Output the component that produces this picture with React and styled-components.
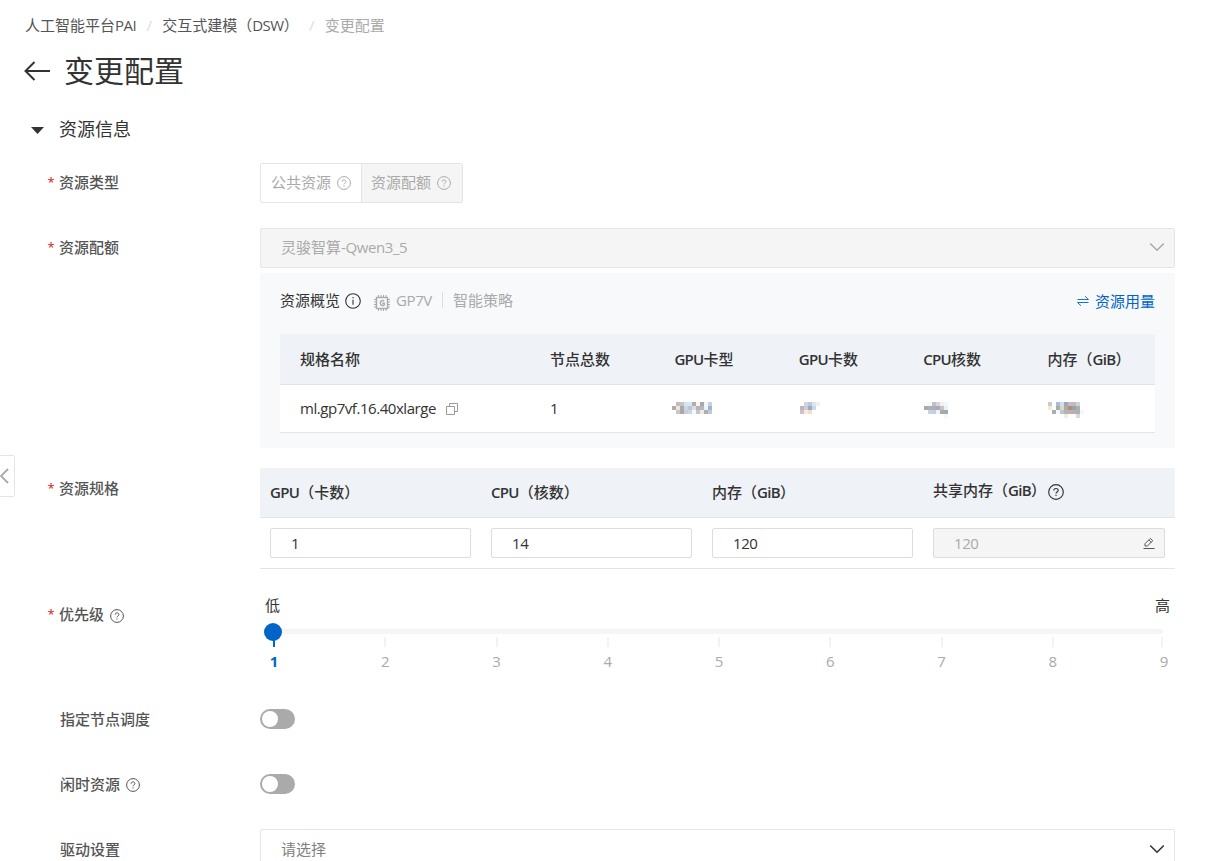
import React from 'react'
import styled, { createGlobalStyle, css } from 'styled-components'

const GlobalStyle = createGlobalStyle`
  * {
    box-sizing: border-box;
  }
  body {
    margin: 0;
    overflow: hidden;
    background: #fff;
    color: #333;
    font-family: 'Open Sans', 'Noto Sans CJK SC', sans-serif;
    font-size: 15px;
    line-height: 22px;
  }
`

const Page = styled.main`
  height: 861px;
  padding: 14px 34px 0 25px;
  overflow: hidden;
`

const Latin = styled.span`
  letter-spacing: ${props => props.$track || -0.5}px;
`

const Breadcrumb = styled.nav`
  display: flex;
  height: 22px;
  color: #555;
  white-space: nowrap;
`

const Crumb = styled.span`
  color: ${props => (props.$current ? '#aaa' : '#555')};
`

const Slash = styled.span`
  width: 26px;
  text-align: center;
  color: #ddd;
`

const TitleBar = styled.header`
  display: flex;
  align-items: center;
  height: 40px;
  margin-top: 15px;

  svg {
    margin: 0 14px 0 -1px;
  }
  h1 {
    margin: 0;
    font-size: 30px;
    font-weight: 400;
    line-height: 40px;
  }
`

const SectionHead = styled.div`
  display: flex;
  align-items: center;
  height: 26px;
  margin-top: 25px;
  padding-left: 6px;

  svg {
    margin: 2px 15px 0 0;
  }
  h2 {
    margin: 0;
    font-size: 18px;
    font-weight: 400;
    line-height: 26px;
  }
`

const Form = styled.div`
  padding-top: 21px;
`

const Field = styled.div`
  display: flex;
  height: ${props => props.$height}px;
  margin-bottom: ${props => props.$gap || 0}px;
`

const Label = styled.div`
  display: flex;
  align-items: center;
  flex: 0 0 235px;
  height: ${props => (props.$raised ? 38 : 40)}px;
  padding-left: ${props => (props.$required ? 23 : 35)}px;
  color: #555;
  font-weight: 500;

  svg {
    margin: ${props => (props.$raised ? 3 : 2)}px 0 0 5.5px;
  }
`

const Star = styled.span`
  width: 11px;
  margin-left: -0.5px;
  margin-right: 0.5px;
  color: #d22020;
  font-size: 13px;
`

const Control = styled.div`
  flex: 1;
  min-width: 0;
`

const RadioGroup = styled.div`
  display: inline-flex;
  height: 40px;
  border: 1px solid #e5e5e5;
  border-radius: 2px;
`

const Radio = styled.div`
  display: flex;
  align-items: center;
  gap: 6px;
  width: ${props => (props.$active ? 101 : 100)}px;
  padding: 0 0 2px ${props => (props.$active ? 9 : 10)}px;
  color: #aaa;
  background: ${props => (props.$active ? '#f5f5f5' : '#fff')};
  border-left: ${props => (props.$active ? '1px solid #e5e5e5' : 'none')};

  svg {
    margin-top: 1px;
  }
`

const Select = styled.div`
  display: flex;
  align-items: center;
  justify-content: space-between;
  height: 40px;
  padding: 0 9px ${props => (props.$disabled ? 2 : 0)}px 20px;
  border: 1px solid #e5e5e5;
  border-radius: 2px;
  color: ${props => (props.$disabled ? '#aaa' : '#808080')};
  background: ${props => (props.$disabled ? '#f5f5f5' : '#fff')};
`

const Overview = styled.section`
  height: 175px;
  margin-top: 5px;
  padding: 16px 20px 0;
  background: #f7f9fb;
`

const OverviewHead = styled.div`
  display: flex;
  align-items: center;
  height: 22px;
  margin-bottom: 23px;
  color: #aaa;

  strong {
    margin-right: 5px;
    color: #333;
    font-weight: 400;
  }
  > svg {
    margin-top: 2px;
  }
`

const ChipName = styled.span`
  display: flex;
  align-items: center;
  margin-left: 13px;

  svg {
    margin: 5px 6px 0 0;
  }
`

const Divider = styled.i`
  width: 1px;
  height: 16px;
  margin: 0 10px;
  background: #ddd;
`

const UsageLink = styled.a`
  display: flex;
  align-items: center;
  gap: 6px;
  margin: 1px 0 0 auto;
  color: #0064c8;
`

const row = css`
  display: grid;
  align-items: center;
  border-bottom: 1px solid #e3e4e6;

  ${Latin} {
    font-weight: ${props => (props.$head ? 600 : 400)};
    letter-spacing: ${props => (props.$head ? -0.7 : -0.45)}px;
  }
`

const SpecRow = styled.div`
  ${row}
  grid-template-columns: 250px repeat(4, 124.4px) 1fr;
  height: ${props => (props.$head ? 51 : 48)}px;
  padding-bottom: ${props => (props.$head ? 0 : 2)}px;
  background: ${props => (props.$head ? '#eff2f7' : '#fff')};
  border-radius: ${props => (props.$head ? '2px 2px 0 0' : 0)};
  font-weight: ${props => (props.$head ? 500 : 400)};
  white-space: nowrap;

  > * {
    display: flex;
    align-items: center;
    padding-left: 20px;
  }
`

const CopyButton = styled.span`
  display: flex;
  margin: 3px 0 0 10px;
`

const Mosaic = styled.span`
  align-self: start;
  padding-top: 17px;

  svg {
    margin-left: ${props => props.$shift || 0}px;
  }
`

const SizeRow = styled.div`
  ${row}
  grid-template-columns: 221px 221px 221px 252px;
  height: ${props => (props.$head ? 50 : 51)}px;
  padding-bottom: ${props => (props.$head ? 2 : 0)}px;
  background: ${props => (props.$head ? '#eff2f7' : '#fff')};
  border-radius: ${props => (props.$head ? '2px 2px 0 0' : 0)};
  font-weight: 500;

  > * {
    margin: 0 10px;
  }
`

const HelpHead = styled.span`
  display: flex;
  align-items: center;
  padding-bottom: 3px;

  svg {
    margin: 3px 0 0 2px;
  }
`

const NumberBox = styled.div`
  display: flex;
  align-items: center;
  justify-content: space-between;
  height: 30px;
  padding: 0 9px 0 20px;
  border: 1px solid #ddd;
  border-radius: 2px;
  font-weight: 400;
  color: ${props => (props.$disabled ? '#aaa' : '#333')};
  background: ${props => (props.$disabled ? '#f5f5f5' : '#fff')};
`

const Ends = styled.div`
  display: flex;
  justify-content: space-between;
  margin-top: -1px;
  padding: 0 5px;
`

const Track = styled.div`
  display: flex;
  align-items: center;
  height: 5px;
  margin: 13px 12px 0 13px;
  border-radius: 3px;
  background: #f5f5f5;
`

const Handle = styled.span`
  flex: none;
  width: 18px;
  height: 18px;
  margin-left: -9px;
  border-radius: 50%;
  background: #0064c8;
`

const Marks = styled.div`
  display: flex;
  justify-content: space-between;
  margin: 3px 1px 0 4px;
`

const Mark = styled.div`
  display: flex;
  flex-direction: column;
  align-items: center;
  width: 20px;
  color: ${props => (props.$on ? '#0064c8' : '#aaa')};
  font-weight: ${props => (props.$on ? 700 : 400)};

  &::before {
    content: '';
    width: 2px;
    height: 10px;
    margin-bottom: 3px;
    background: ${props => (props.$on ? '#0064c8' : '#f2f2f2')};
  }
  &:last-child::before {
    margin-right: 5px;
  }
`

const Switch = styled.div`
  width: 35px;
  height: 20px;
  margin-top: 10px;
  padding: 2px;
  border-radius: 10px;
  background: #aaa;

  &::before {
    content: '';
    display: block;
    width: 16px;
    height: 16px;
    border-radius: 50%;
    background: #fff;
  }
`

const Collapse = styled.div`
  position: absolute;
  top: 455px;
  left: -1px;
  display: flex;
  align-items: center;
  width: 16px;
  height: 42px;
  border: 1px solid #e5e5e5;
  border-radius: 0 2px 2px 0;
  background: #fff;
`

const Help = ({ size = 14, color = '#555' }) => (
  <svg width={size} height={size} viewBox="0 0 14 14" fill="none" stroke={color}>
    <circle cx="7" cy="7" r="6.4" />
    <path d="M5.1 5.7c0-1.1.8-1.8 1.9-1.8s1.9.7 1.9 1.7c0 1.3-1.9 1.4-1.9 2.7" />
    <path d="M7 9.4v1.1" />
  </svg>
)

const Info = () => (
  <svg width="16" height="16" viewBox="0 0 16 16" fill="none" stroke="#333" strokeWidth="1.1">
    <circle cx="8" cy="8" r="7.3" />
    <path d="M8 6.7v5M8 4v1.3" />
  </svg>
)

const Chip = () => (
  <svg width="16" height="16" viewBox="0 0 16 16" fill="none" stroke="#aaa">
    <rect x="2.5" y="2.5" width="11" height="11" strokeWidth="1.4" />
    <path d="M4.5 0v2M7 0v2M9.5 0v2M12 0v2M4.5 14v2M7 14v2M9.5 14v2M12 14v2M0 4.5h2M0 7h2M0 9.5h2M0 12h2M14 4.5h2M14 7h2M14 9.5h2M14 12h2" />
    <path d="M10 6.2C9.2 5.3 6.3 5.2 6.3 8s2.9 3 3.9 1.9V8.2H8.3" strokeWidth="1.5" />
  </svg>
)

const Chevron = ({ color }) => (
  <svg width="16" height="10" viewBox="0 0 16 10" fill="none" stroke={color} strokeWidth="1.6">
    <path d="M1.2 1.5 8 8.2l6.8-6.7" />
  </svg>
)

const Swap = () => (
  <svg width="12" height="12" viewBox="0 0 12 12" fill="none" stroke="#0064c8" strokeWidth="0.9">
    <path d="M.5 4.5h11L8 1.2M11.5 7.5H.5L4 10.8" />
  </svg>
)

const Copy = () => (
  <svg width="12" height="12" viewBox="0 0 12 12" fill="none" stroke="#999">
    <path d="M.5 3.5h8v8h-8zM3.5 3.5v-3h8v8h-3" />
  </svg>
)

const Pencil = () => (
  <svg width="12" height="12" viewBox="0 0 12 12" fill="none" stroke="#555">
    <path d="M.5 11.5h11M2 9V6.7l5.3-5.3 2.5 2.3L4.3 9zM5.8 3l2.4 2.4" />
  </svg>
)

const Pixels = ({ rows }) => (
  <svg width={rows[0].length * 4} height={rows.length * 4} shapeRendering="crispEdges">
    {rows.map((cells, y) =>
      cells.map(
        (fill, x) => fill && <rect key={`${x}-${y}`} x={x * 4} y={y * 4} width="4" height="4" fill={fill} />
      )
    )}
  </svg>
)

const gpuModel = [
  [0, '#c4bcb8', '#c6c6ca', '#d5e5f2', '#cfe8fb', '#aaaeb3', '#fff3e3', '#a9a9ad', '#f3f6f8', '#ccd0de'],
  ['#adadad', '#f1e4dc', '#aaaaac', '#c3dceb', '#b8c8d4', '#e4dbd2', '#bcb3ae', '#b7b7c2', '#e6f5ff', '#a7b1c3'],
  [0, '#c3c8cc', '#b8a49c', '#c9cedb', '#d1d5df', '#f8f8f8', '#b7c8e2', '#f9e8d5', '#b4aca8', '#b5cbe6'],
]
const gpuCount = [
  [0, '#d2d5df', '#b8c9df', '#dfe3ea', '#f1f1f3'],
  ['#c6b2b2', '#c9cdda', '#94accb', '#cfd9e6', 0],
  ['#c6c4cc', '#fbe9d8', '#f2dfc8', 0, 0],
]
const cpuCores = [
  ['#fff9f2', '#f6f8fa', '#bfc1ca', '#d2d6e1', '#fbeee8', '#edf8ff'],
  ['#aaa', '#adb0b3', '#b0acb4', '#b0a9ac', '#c2c5d1', '#e6f2fa'],
  [0, '#c3d5ed', '#bcd0ee', '#eef2f4', '#aaa8a7', '#aea6a2'],
  [0, 0, 0, 0, 0, '#edf8ff'],
]
const memory = [
  ['#cfc8c5', '#f8fffd', '#adbad4', '#cfdff2', '#a7a5a5', '#bebec8', '#c5b8b7', '#ccd2e1', 0],
  ['#fde9d1', '#f3fffd', '#aaa', '#dedac9', '#b0a9a6', '#aa8d8d', '#91a4b0', '#aeaeae', 0],
  [0, '#adadad', '#f2fbff', '#bac7cf', '#b5b3b1', '#c2aeab', '#bdaead', '#b0b0b0', '#f1f8ff'],
  [0, 0, 0, 0, '#f7e9e4', 0, 0, '#d2dae6', 0],
]

const App = () => (
  <>
    <GlobalStyle />
    <Page>
      <Breadcrumb>
        <Crumb>
          人工智能平台<Latin>PAI</Latin>
        </Crumb>
        <Slash>/</Slash>
        <Crumb>
          交互式建模（<Latin>DSW</Latin>）
        </Crumb>
        <Slash>/</Slash>
        <Crumb $current>变更配置</Crumb>
      </Breadcrumb>
      <TitleBar>
        <svg width="26" height="20" viewBox="0 0 26 20" fill="none" stroke="#333" strokeWidth="2">
          <path d="M26 10H1.5M10.5 1 1.5 10l9 9" />
        </svg>
        <h1>变更配置</h1>
      </TitleBar>
      <SectionHead>
        <svg width="13" height="7" viewBox="0 0 13 7" fill="#333">
          <path d="M0 0h13L6.5 7z" />
        </svg>
        <h2>资源信息</h2>
      </SectionHead>
      <Form>
        <Field $height={40} $gap={25}>
          <Label $required $raised>
            <Star>*</Star>资源类型
          </Label>
          <Control>
            <RadioGroup>
              <Radio>
                公共资源
                <Help color="#aaa" />
              </Radio>
              <Radio $active>
                资源配额
                <Help color="#aaa" />
              </Radio>
            </RadioGroup>
          </Control>
        </Field>
        <Field $height={220} $gap={20}>
          <Label $required $raised>
            <Star>*</Star>资源配额
          </Label>
          <Control>
            <Select $disabled>
              <span>
                灵骏智算<Latin $track={-0.4}>-Qwen3_5</Latin>
              </span>
              <Chevron color="#aaa" />
            </Select>
            <Overview>
              <OverviewHead>
                <strong>资源概览</strong>
                <Info />
                <ChipName>
                  <Chip />
                  <Latin $track={-0.4}>GP7V</Latin>
                </ChipName>
                <Divider />
                智能策略
                <UsageLink>
                  <Swap />
                  资源用量
                </UsageLink>
              </OverviewHead>
              <SpecRow $head>
                <span>规格名称</span>
                <span>节点总数</span>
                <span>
                  <Latin>GPU</Latin>卡型
                </span>
                <span>
                  <Latin>GPU</Latin>卡数
                </span>
                <span>
                  <Latin>CPU</Latin>核数
                </span>
                <span>
                  内存（<Latin>GiB</Latin>）
                </span>
              </SpecRow>
              <SpecRow>
                <span>
                  <Latin>ml.gp7vf.16.40xlarge</Latin>
                  <CopyButton>
                    <Copy />
                  </CopyButton>
                </span>
                <span>1</span>
                <Mosaic $shift={-2}>
                  <Pixels rows={gpuModel} />
                </Mosaic>
                <Mosaic $shift={1}>
                  <Pixels rows={gpuCount} />
                </Mosaic>
                <Mosaic $shift={1}>
                  <Pixels rows={cpuCores} />
                </Mosaic>
                <Mosaic>
                  <Pixels rows={memory} />
                </Mosaic>
              </SpecRow>
            </Overview>
          </Control>
        </Field>
        <Field $height={101} $gap={26}>
          <Label $required>
            <Star>*</Star>资源规格
          </Label>
          <Control>
            <SizeRow $head>
              <span>
                <Latin>GPU</Latin>（卡数）
              </span>
              <span>
                <Latin>CPU</Latin>（核数）
              </span>
              <span>
                内存（<Latin>GiB</Latin>）
              </span>
              <HelpHead>
                共享内存（<Latin>GiB</Latin>）
                <Help size={16} color="#333" />
              </HelpHead>
            </SizeRow>
            <SizeRow>
              <NumberBox>1</NumberBox>
              <NumberBox>
                <Latin>14</Latin>
              </NumberBox>
              <NumberBox>
                <Latin>120</Latin>
              </NumberBox>
              <NumberBox $disabled>
                <Latin>120</Latin>
                <Pencil />
              </NumberBox>
            </SizeRow>
          </Control>
        </Field>
        <Field $height={104}>
          <Label $required $raised>
            <Star>*</Star>优先级
            <Help />
          </Label>
          <Control>
            <Ends>
              <span>低</span>
              <span>高</span>
            </Ends>
            <Track>
              <Handle />
            </Track>
            <Marks>
              {[1, 2, 3, 4, 5, 6, 7, 8, 9].map(level => (
                <Mark key={level} $on={level === 1}>
                  {level}
                </Mark>
              ))}
            </Marks>
          </Control>
        </Field>
        <Field $height={40} $gap={25}>
          <Label>指定节点调度</Label>
          <Switch />
        </Field>
        <Field $height={40} $gap={25}>
          <Label>
            闲时资源
            <Help />
          </Label>
          <Switch />
        </Field>
        <Field $height={40}>
          <Label>驱动设置</Label>
          <Control>
            <Select>
              请选择
              <Chevron color="#333" />
            </Select>
          </Control>
        </Field>
      </Form>
    </Page>
    <Collapse>
      <svg width="9" height="16" viewBox="0 0 9 16" fill="none" stroke="#aaa" strokeWidth="1.8">
        <path d="M8 1 1 8l7 7" />
      </svg>
    </Collapse>
  </>
)

export default App
